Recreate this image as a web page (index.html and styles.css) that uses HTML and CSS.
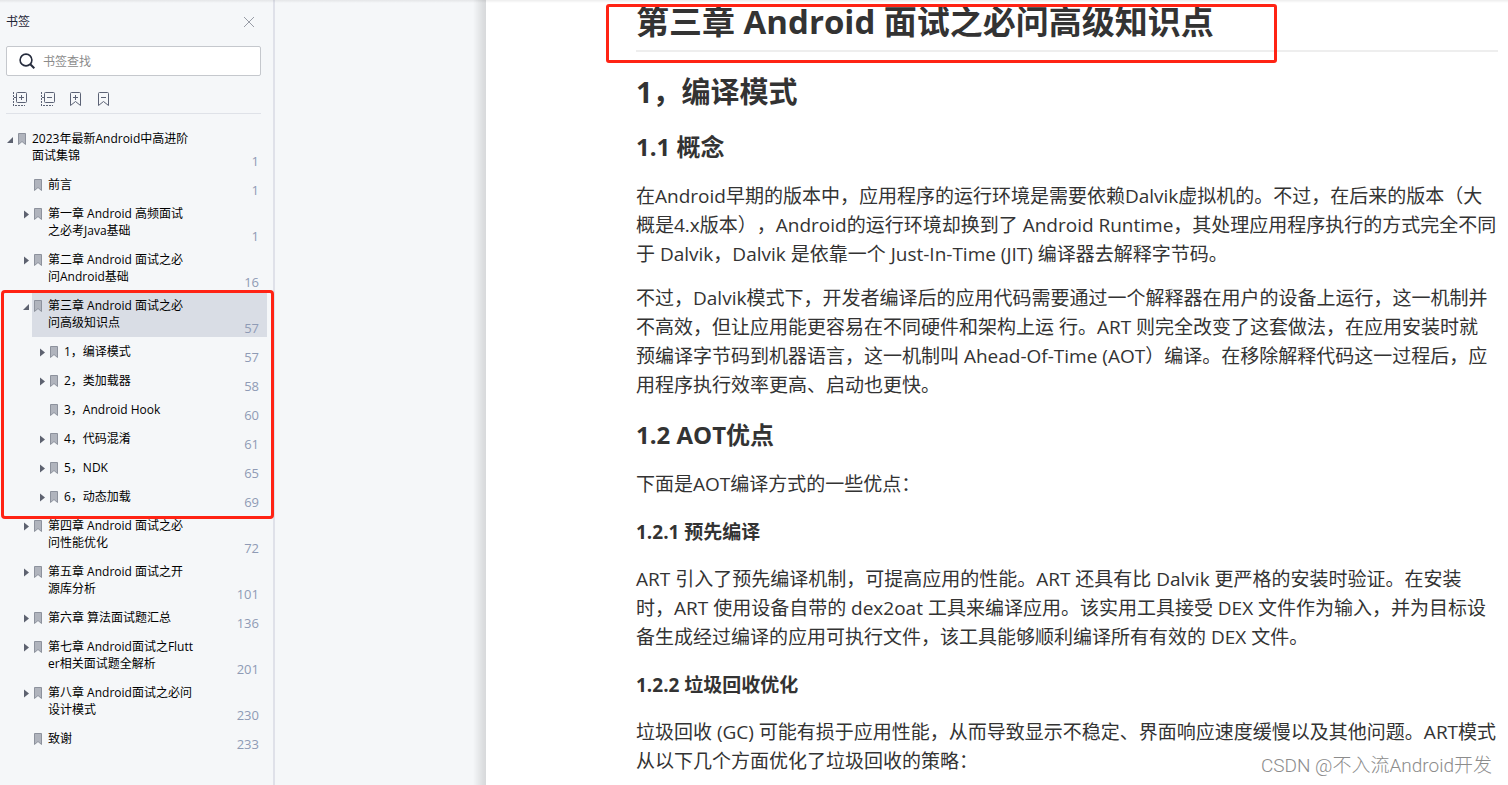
FILE: index.html
```html
<!DOCTYPE html>
<html lang="zh-CN">
<head>
<meta charset="utf-8">
<title>书签</title>
<link rel="stylesheet" href="styles.css">
</head>
<body>
<svg class="defs" aria-hidden="true">
  <symbol id="mark" viewBox="0 0 8 12"><path d="M.5.5h7v11L4 8.500.5 11.500z" fill="#b0b4bd" stroke="#8d929d"/></symbol>
  <symbol id="closed" viewBox="0 0 12 12"><path d="M4 1.500l5 4-5 4z" fill="#5d6270"/></symbol>
  <symbol id="open" viewBox="0 0 12 12"><path d="M9 3v6H3z" fill="#5d6270"/></symbol>
</svg>
<div class="app">
  <aside class="sidebar">
    <header class="sidebar-head">
      <h2 class="sidebar-title">书签</h2>
      <button class="icon-btn" aria-label="关闭"><svg width="12" height="12" viewBox="0 0 12 12"><path d="M1 1l10 10M11 1L1 11" stroke="#989ca6" fill="none"/></svg></button>
    </header>
    <label class="search">
      <svg width="16" height="16" viewBox="0 0 16 16" fill="none" stroke="#262c3d" stroke-width="1.600"><circle cx="7" cy="7" r="5.900"/><path d="M11.300 11.300l4 4" stroke-width="2"/></svg>
      <input type="text" placeholder="书签查找" aria-label="书签查找">
    </label>
    <div class="tools">
      <button class="icon-btn" aria-label="全部展开"><svg width="16" height="16" viewBox="0 0 16 16" fill="none" stroke="#5b6275"><rect x="4.500" y="1.500" width="10" height="10" rx="1"/><path d="M7 6.500h5M9.500 4v5M2 6.500h2"/><path d="M1.500 1v14M3 14.500h10" stroke-dasharray="2 1"/></svg></button>
      <button class="icon-btn" aria-label="全部折叠"><svg width="16" height="16" viewBox="0 0 16 16" fill="none" stroke="#5b6275"><rect x="4.500" y="1.500" width="10" height="10" rx="1"/><path d="M7 6.500h5M2 6.500h2"/><path d="M1.500 1v14M3 14.500h10" stroke-dasharray="2 1"/></svg></button>
      <button class="icon-btn" aria-label="添加书签"><svg width="16" height="16" viewBox="0 0 16 16" fill="none" stroke="#5b6275"><path d="M2.500 2.500a1 1 0 0 1 1-1h8a1 1 0 0 1 1 1v12l-5-4-5 4z"/><path d="M5 6.500h5M7.500 4v5"/></svg></button>
      <button class="icon-btn" aria-label="删除书签"><svg width="16" height="16" viewBox="0 0 16 16" fill="none" stroke="#5b6275"><path d="M2.500 2.500a1 1 0 0 1 1-1h8a1 1 0 0 1 1 1v12l-5-4-5 4z"/><path d="M5 6.500h5"/></svg></button>
    </div>
    <ul class="tree">
      <li>
        <div class="row"><button class="toggle" aria-label="折叠"><svg><use href="#open"/></svg></button><a class="entry" href="#"><svg class="mark"><use href="#mark"/></svg><span class="name">2023年最新Android中高进阶<br>面试集锦</span><span class="page-no">1</span></a></div>
        <ul>
          <li><div class="row"><span class="toggle"></span><a class="entry" href="#"><svg class="mark"><use href="#mark"/></svg><span class="name">前言</span><span class="page-no">1</span></a></div></li>
          <li><div class="row"><button class="toggle" aria-label="展开"><svg><use href="#closed"/></svg></button><a class="entry" href="#"><svg class="mark"><use href="#mark"/></svg><span class="name">第一章 Android 高频面试<br>之必考Java基础</span><span class="page-no">1</span></a></div></li>
          <li><div class="row"><button class="toggle" aria-label="展开"><svg><use href="#closed"/></svg></button><a class="entry" href="#"><svg class="mark"><use href="#mark"/></svg><span class="name">第二章 Android 面试之必<br>问Android基础</span><span class="page-no">16</span></a></div></li>
          <li class="marked">
            <div class="row"><button class="toggle" aria-label="折叠"><svg><use href="#open"/></svg></button><a class="entry current" href="#"><svg class="mark"><use href="#mark"/></svg><span class="name">第三章 Android 面试之必<br>问高级知识点</span><span class="page-no">57</span></a></div>
            <ul>
              <li><div class="row"><button class="toggle" aria-label="展开"><svg><use href="#closed"/></svg></button><a class="entry" href="#"><svg class="mark"><use href="#mark"/></svg><span class="name">1，编译模式</span><span class="page-no">57</span></a></div></li>
              <li><div class="row"><button class="toggle" aria-label="展开"><svg><use href="#closed"/></svg></button><a class="entry" href="#"><svg class="mark"><use href="#mark"/></svg><span class="name">2，类加载器</span><span class="page-no">58</span></a></div></li>
              <li><div class="row"><span class="toggle"></span><a class="entry" href="#"><svg class="mark"><use href="#mark"/></svg><span class="name">3，Android Hook</span><span class="page-no">60</span></a></div></li>
              <li><div class="row"><button class="toggle" aria-label="展开"><svg><use href="#closed"/></svg></button><a class="entry" href="#"><svg class="mark"><use href="#mark"/></svg><span class="name">4，代码混淆</span><span class="page-no">61</span></a></div></li>
              <li><div class="row"><button class="toggle" aria-label="展开"><svg><use href="#closed"/></svg></button><a class="entry" href="#"><svg class="mark"><use href="#mark"/></svg><span class="name">5，NDK</span><span class="page-no">65</span></a></div></li>
              <li><div class="row"><button class="toggle" aria-label="展开"><svg><use href="#closed"/></svg></button><a class="entry" href="#"><svg class="mark"><use href="#mark"/></svg><span class="name">6，动态加载</span><span class="page-no">69</span></a></div></li>
            </ul>
          </li>
          <li><div class="row"><button class="toggle" aria-label="展开"><svg><use href="#closed"/></svg></button><a class="entry" href="#"><svg class="mark"><use href="#mark"/></svg><span class="name">第四章 Android 面试之必<br>问性能优化</span><span class="page-no">72</span></a></div></li>
          <li><div class="row"><button class="toggle" aria-label="展开"><svg><use href="#closed"/></svg></button><a class="entry" href="#"><svg class="mark"><use href="#mark"/></svg><span class="name">第五章 Android 面试之开<br>源库分析</span><span class="page-no">101</span></a></div></li>
          <li><div class="row"><button class="toggle" aria-label="展开"><svg><use href="#closed"/></svg></button><a class="entry" href="#"><svg class="mark"><use href="#mark"/></svg><span class="name">第六章 算法面试题汇总</span><span class="page-no">136</span></a></div></li>
          <li><div class="row"><button class="toggle" aria-label="展开"><svg><use href="#closed"/></svg></button><a class="entry" href="#"><svg class="mark"><use href="#mark"/></svg><span class="name">第七章 Android面试之Flutt<br>er相关面试题全解析</span><span class="page-no">201</span></a></div></li>
          <li><div class="row"><button class="toggle" aria-label="展开"><svg><use href="#closed"/></svg></button><a class="entry" href="#"><svg class="mark"><use href="#mark"/></svg><span class="name">第八章 Android面试之必问<br>设计模式</span><span class="page-no">230</span></a></div></li>
          <li><div class="row"><span class="toggle"></span><a class="entry" href="#"><svg class="mark"><use href="#mark"/></svg><span class="name">致谢</span><span class="page-no">233</span></a></div></li>
        </ul>
      </li>
    </ul>
  </aside>
  <div class="gutter"></div>
  <main class="doc">
    <h1>第三章 Android 面试之必问高级知识点</h1>
    <h2>1，编译模式</h2>
    <h3>1.1 概念</h3>
    <p>在Android早期的版本中，应用程序的运行环境是需要依赖Dalvik虚拟机的。不过，在后来的版本（大<br>概是4.x版本），Android的运行环境却换到了 Android Runtime，其处理应用程序执行的方式完全不同<br>于 Dalvik，Dalvik 是依靠一个 Just-In-Time (JIT) 编译器去解释字节码。</p>
    <p class="next">不过，Dalvik模式下，开发者编译后的应用代码需要通过一个解释器在用户的设备上运行，这一机制并<br>不高效，但让应用能更容易在不同硬件和架构上运 行。ART 则完全改变了这套做法，在应用安装时就<br>预编译字节码到机器语言，这一机制叫 Ahead-Of-Time (AOT）编译。在移除解释代码这一过程后，应<br>用程序执行效率更高、启动也更快。</p>
    <h3>1.2 AOT优点</h3>
    <p>下面是AOT编译方式的一些优点：</p>
    <h4>1.2.1 预先编译</h4>
    <p>ART 引入了预先编译机制，可提高应用的性能。ART 还具有比 Dalvik 更严格的安装时验证。在安装<br>时，ART 使用设备自带的 dex2oat 工具来编译应用。该实用工具接受 DEX 文件作为输入，并为目标设<br>备生成经过编译的应用可执行文件，该工具能够顺利编译所有有效的 DEX 文件。</p>
    <h4>1.2.2 垃圾回收优化</h4>
    <p>垃圾回收 (GC) 可能有损于应用性能，从而导致显示不稳定、界面响应速度缓慢以及其他问题。ART模式<br>从以下几个方面优化了垃圾回收的策略：</p>
    <div class="title-frame"></div>
  </main>
  <div class="watermark">CSDN @不入流Android开发</div>
</div>
</body>
</html>
```
FILE: styles.css
```css
* { box-sizing: border-box; }
body, h1, h2, h3, h4, p, ul { margin: 0; padding: 0; }
ul { list-style: none; }
body {
  font-family: "Open Sans", "Noto Sans CJK SC", sans-serif;
  text-spacing-trim: space-all;
  text-autospace: no-autospace;
  background: #f5f7f9;
}
button { border: 0; padding: 0; background: none; cursor: pointer; }
svg { display: block; }
.defs { position: absolute; width: 0; height: 0; }

.app {
  position: relative;
  display: flex;
  min-height: 100vh;
  overflow: hidden;
}
.app::before {
  content: "";
  position: absolute;
  inset: 0 0 auto;
  height: 3px;
  background: linear-gradient(rgba(0, 0, 0, .07), rgba(0, 0, 0, 0));
  z-index: 1;
}

.sidebar {
  flex: 0 0 275px;
  border-right: 2px solid #dfe1e9;
  color: #000;
  font-size: 12px;
  line-height: 17px;
}
.sidebar-head {
  display: flex;
  align-items: center;
  justify-content: space-between;
  padding: 13px 18px 0 6px;
}
.sidebar-title { font-size: 12px; font-weight: 400; color: #1f2536; }
.search {
  display: flex;
  align-items: center;
  gap: 8px;
  height: 30px;
  margin: 16px 12px 0 6px;
  padding: 0 12px;
  border: 1px solid #c5c8cd;
  border-radius: 2px;
  background: #fff;
}
.search input {
  flex: 1;
  min-width: 0;
  border: 0;
  padding: 0;
  outline: 0;
  background: none;
  font: inherit;
}
.search input::placeholder { color: #8b8b8b; }
.tools {
  display: flex;
  gap: 12px;
  margin: 0 12px 0 6px;
  padding: 15px 6px 6px;
  border-bottom: 1px solid #dfe2e8;
}

.tree { padding: 10px 6px 0 0; }
.tree ul { padding-left: 16px; }
.row { display: flex; }
.toggle { flex: 0 0 12px; height: 12px; margin: 10px 0 0 4px; }
.toggle svg { width: 12px; height: 12px; }
.entry {
  flex: 1;
  display: flex;
  padding: 0 8px 0 2px;
  color: inherit;
  text-decoration: none;
}
.current { background: #d9dde5; }
.mark { width: 8px; height: 12px; margin: 9px 6px 0 0; }
.name { padding: 6px 0; white-space: nowrap; }
.page-no {
  margin-left: auto;
  align-self: flex-end;
  font-size: 13px;
  color: #8f9bb5;
}
.marked { position: relative; }
.marked::after {
  content: "";
  position: absolute;
  inset: -1px -7px -8px -15px;
  border: 3px solid #ff2314;
  border-radius: 4px;
  pointer-events: none;
  z-index: 1;
}

.gutter {
  flex: 0 0 211px;
  background: linear-gradient(to right, rgba(0, 0, 0, 0) 198px, rgba(0, 0, 0, .1) 208px, rgba(0, 0, 0, .12));
}
.doc {
  position: relative;
  flex: 1;
  min-width: 0;
  padding: 0 10px 10px 150px;
  background: #fff;
  color: #333;
  font-size: 19px;
  line-height: 29px;
  white-space: nowrap;
}
.doc h1 {
  padding-bottom: 6px;
  border-bottom: 2px solid #eee;
  font-size: 33px;
  line-height: 44px;
}
.doc h2 { margin-top: 20px; font-size: 29px; line-height: 40px; }
.doc h3 { margin-top: 18px; font-size: 24px; line-height: 34px; }
.doc h4 { margin-top: 19px; font-size: 19px; line-height: 29px; }
.doc p { margin-top: 18px; }
.doc .next { margin-top: 15px; }
.title-frame {
  position: absolute;
  top: 4px;
  left: 120px;
  width: 671px;
  height: 59px;
  border: 3px solid #ff2314;
  border-radius: 3px;
}
.watermark {
  position: absolute;
  right: 16px;
  bottom: 6px;
  font-family: Roboto, "Noto Sans CJK SC", sans-serif;
  font-size: 19px;
  font-weight: 300;
  line-height: 28px;
  color: #8c8c8c;
}
```
